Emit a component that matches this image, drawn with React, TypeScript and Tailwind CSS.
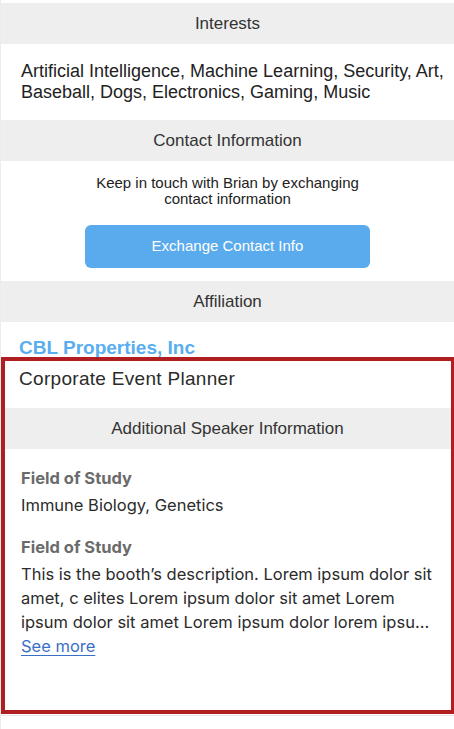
import React from "react";

const SectionHeader = ({ title }: { title: string }) => (
	<div className="flex h-[41px] items-center justify-center bg-[#eeeeee] font-['Liberation_Sans',Arial,sans-serif] text-[17px] text-[#333333]">
		{title}
	</div>
);

const Field = ({ label, children }: { label: string; children: React.ReactNode }) => (
	<div className="flex flex-col">
		<h4 className="text-[16.5px] font-bold leading-[24px] text-[#6b6b6b]">{label}</h4>
		<div className="mt-[3px] text-[16.5px] leading-[24px] text-[#2b2b2b]">{children}</div>
	</div>
);

export default function App() {
	return (
		<div className="relative h-[729px] w-[454px] overflow-hidden border-l border-[#ececec] bg-white font-['Liberation_Sans',Arial,sans-serif]">
			<div className="pt-[3px]">
				<SectionHeader title="Interests" />

				<p className="pt-[17px] pr-[10px] pb-[17px] pl-[20px] text-[18px] leading-[21px] text-[#222222]">
					Artificial Intelligence, Machine Learning, Security, Art, Baseball, Dogs,
					Electronics, Gaming, Music
				</p>

				<SectionHeader title="Contact Information" />

				<div className="flex flex-col items-center pt-[14px] pb-[13px]">
					<p className="text-center text-[15px] leading-[16px] text-[#222222]">
						Keep in touch with Brian by exchanging
						<br />
						contact information
					</p>
					<button className="mt-[18px] h-[43px] w-[285px] rounded-[6px] bg-[#5aabee] text-[15px] text-white">
						Exchange Contact Info
					</button>
				</div>

				<SectionHeader title="Affiliation" />

				<h3 className="px-[18px] pt-[15px] text-[19px] font-bold leading-[22px] text-[#5aaef0]">
					CBL Properties, Inc
				</h3>

				<p className="px-[18px] pt-[8px] pb-[17px] text-[19px] leading-[24px] tracking-[0.3px] text-[#2b2b2b]">
					Corporate Event Planner
				</p>

				<SectionHeader title="Additional Speaker Information" />

				<div className="flex flex-col gap-[18px] px-[20px] pt-[17px] font-['Inter','Noto_Sans',sans-serif]">
					<Field label="Field of Study">Immune Biology, Genetics</Field>
					<Field label="Field of Study">
						<p>
							This is the booth’s description. Lorem ipsum dolor sit amet, c elites
							Lorem ipsum dolor sit amet Lorem ipsum dolor sit amet Lorem ipsum dolor
							lorem ipsu…
						</p>
						<a href="#" className="text-[#3a6fc8] underline underline-offset-[3px]">
							See more
						</a>
					</Field>
				</div>
			</div>

			{/* highlight frame */}
			<div className="pointer-events-none absolute top-[357px] left-0 h-[357px] w-[454px] border-4 border-[#b01e22]" />
			<div className="absolute top-[715px] right-0 left-0 h-px bg-[#e6e6e6]" />
		</div>
	);
}
